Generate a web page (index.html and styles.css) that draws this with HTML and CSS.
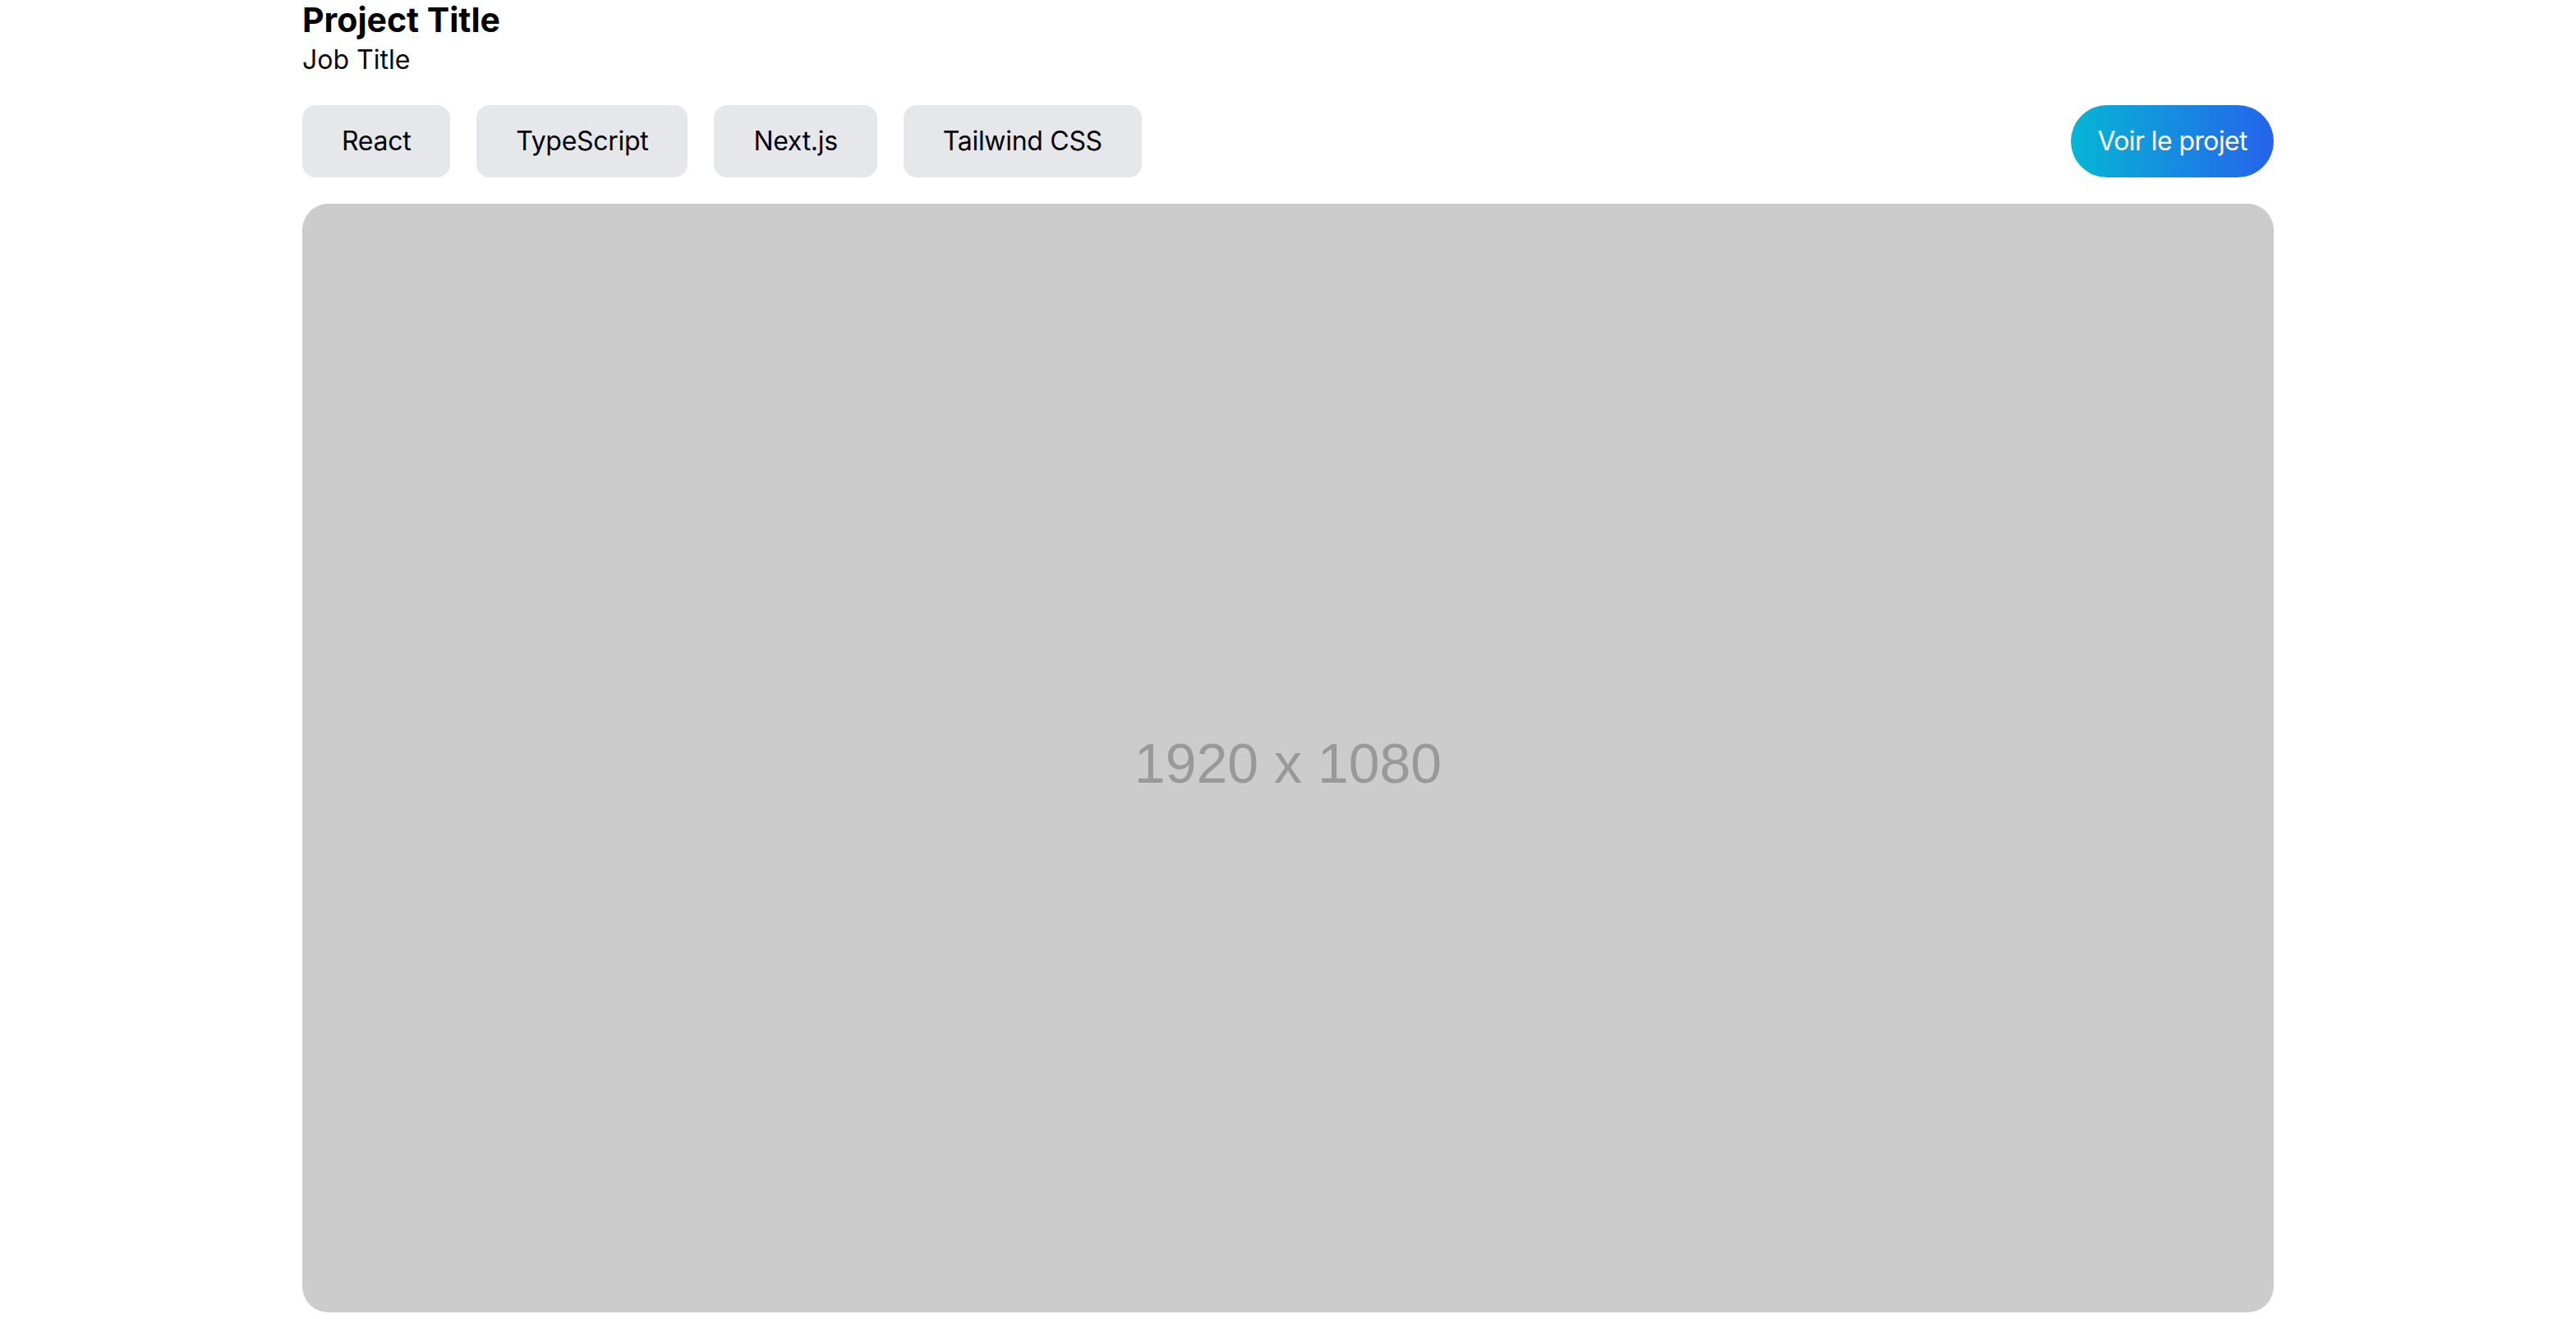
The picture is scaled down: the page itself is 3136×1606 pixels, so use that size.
FILE: index.html
```html
<!DOCTYPE html>
<html lang="fr">
<head>
<meta charset="utf-8">
<title>Project Title</title>
<link rel="stylesheet" href="styles.css">
</head>
<body>
<main class="project">
  <header class="project-head">
    <h1 class="project-title">Project Title</h1>
    <p class="job-title">Job Title</p>
  </header>
  <div class="toolbar">
    <ul class="tags">
      <li class="tag">React</li>
      <li class="tag">TypeScript</li>
      <li class="tag">Next.js</li>
      <li class="tag">Tailwind CSS</li>
    </ul>
    <a class="cta" href="#">Voir le projet</a>
  </div>
  <div class="preview">
    <span class="preview-label">1920 x 1080</span>
  </div>
</main>
</body>
</html>
```

FILE: styles.css
```css
* { box-sizing: border-box; }
html, body { margin: 0; padding: 0; background: #ffffff; }
body {
  font-family: Inter, "Noto Sans", "Liberation Sans", sans-serif;
  color: #000000;
}
.project {
  width: 2400px;
  margin: 0 auto;
  display: flex;
  flex-direction: column;
}
.project-head { display: flex; flex-direction: column; }
.project-title {
  margin: 0;
  font-size: 41px;
  line-height: 49px;
  font-weight: 700;
  color: #000;
}
.job-title {
  margin: 0;
  font-size: 32px;
  line-height: 48px;
  font-weight: 400;
  color: #0a0a0a;
}
.toolbar {
  margin-top: 31px;
  display: flex;
  align-items: center;
  justify-content: space-between;
}
.tags {
  list-style: none;
  margin: 0;
  padding: 0;
  display: flex;
  gap: 32px;
}
.tag {
  background: #e5e7eb;
  border-radius: 16px;
  padding: 20px 48px;
  font-size: 32px;
  line-height: 48px;
  letter-spacing: -0.3px;
  color: #000;
}
.cta {
  display: block;
  padding: 20px 32px;
  border-radius: 9999px;
  background: linear-gradient(90deg, #06b6d4, #2563eb);
  color: #ffffff;
  font-size: 32px;
  line-height: 48px;
  letter-spacing: -0.6px;
  text-decoration: none;
}
.preview {
  margin-top: 32px;
  width: 2400px;
  height: 1350px;
  background: #cccccc;
  border-radius: 32px;
  display: flex;
  align-items: center;
  justify-content: center;
}
.preview-label {
  font-family: "Liberation Sans", Arial, sans-serif;
  font-size: 68px;
  line-height: 1;
  color: #999999;
  position: relative;
  top: 6px;
}
```
